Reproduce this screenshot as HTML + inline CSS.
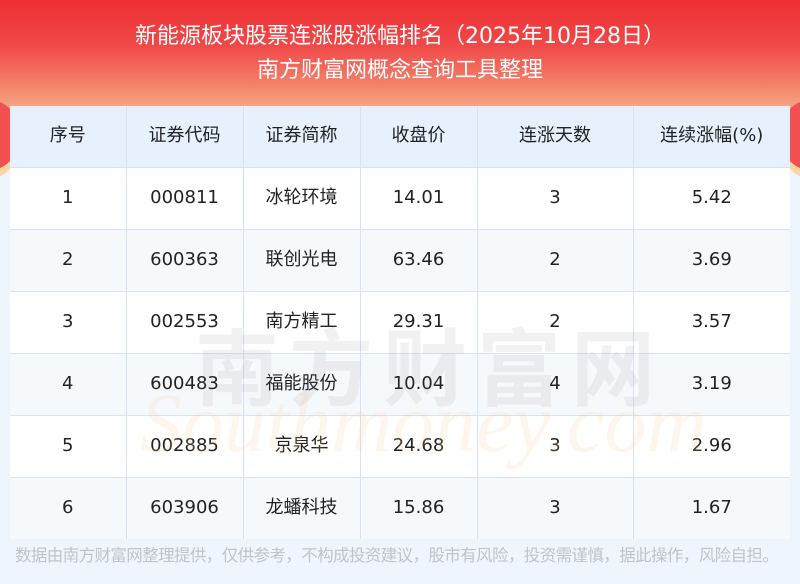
<!DOCTYPE html>
<html><head><meta charset="utf-8"><style>
*{margin:0;padding:0;box-sizing:border-box}
body{width:800px;height:584px;overflow:hidden;background:#eef5fc;font-family:"DejaVu Sans","Noto Sans CJK SC",sans-serif;position:relative}
.hdr{position:absolute;left:0;top:0;width:800px;height:150px;background:linear-gradient(180deg,#ee2f33 0%,#f04848 30%,#f48a70 60%,#f8c8a0 85%,#eef5fc 100%)}
.sideL{position:absolute;left:-40px;top:100px;width:60px;height:70px;border-radius:50%;background:#f05050;box-shadow:0 8px 0 #f9d6a0}
.sideR{position:absolute;right:-40px;top:100px;width:60px;height:70px;border-radius:50%;background:#f05050;box-shadow:0 8px 0 #f9d6a0}
.t1{position:absolute;top:23px;left:0;width:800px;text-align:center;color:#fff;font-size:22px;line-height:28px}
.t2{position:absolute;top:57px;left:0;width:800px;text-align:center;color:#fff;font-size:22px;line-height:28px}
table{position:absolute;left:10px;top:106px;width:780px;border-collapse:collapse;font-size:18px;color:#222;line-height:20px}
td{border-left:1px solid #d6e2f5;border-top:1px solid #d6e2f5;text-align:center;height:62px;vertical-align:middle}
td:first-child{border-left:none}
tr.h td{background:#e6f1fd;border-top:none;height:61px}
tr:nth-child(odd):not(.h) td{background:#f6f9fc}
tr:nth-child(even) td{background:#fff}
.foot{position:absolute;top:542px;left:15px;color:#c0c4c8;font-size:16.5px;letter-spacing:-0.6px;white-space:nowrap}
.wm1{position:absolute;left:195px;top:320px;font-size:84px;color:rgba(120,120,120,0.10);font-weight:bold;letter-spacing:10px;line-height:100px}
.wm2{position:absolute;left:140px;top:375px;font-size:84px;color:rgba(250,200,140,0.16);font-style:italic;font-family:"Liberation Serif",serif}
</style></head><body>
<div class="hdr"></div><div class="sideL"></div><div class="sideR"></div>
<div class="t1">新能源板块股票连涨股涨幅排名（2025年10月28日）</div>
<div class="t2">南方财富网概念查询工具整理</div>
<table>
<colgroup><col style="width:116px"><col style="width:117px"><col style="width:117px"><col style="width:117px"><col style="width:156px"><col style="width:157px"></colgroup>
<tr class="h"><td>序号</td><td>证券代码</td><td>证券简称</td><td>收盘价</td><td>连涨天数</td><td>连续涨幅(%)</td></tr>
<tr><td>1</td><td>000811</td><td>冰轮环境</td><td>14.01</td><td>3</td><td>5.42</td></tr>
<tr><td>2</td><td>600363</td><td>联创光电</td><td>63.46</td><td>2</td><td>3.69</td></tr>
<tr><td>3</td><td>002553</td><td>南方精工</td><td>29.31</td><td>2</td><td>3.57</td></tr>
<tr><td>4</td><td>600483</td><td>福能股份</td><td>10.04</td><td>4</td><td>3.19</td></tr>
<tr><td>5</td><td>002885</td><td>京泉华</td><td>24.68</td><td>3</td><td>2.96</td></tr>
<tr><td>6</td><td>603906</td><td>龙蟠科技</td><td>15.86</td><td>3</td><td>1.67</td></tr>
</table>
<div class="wm1">南方财富网</div>
<div class="wm2">Southmoney.com</div>
<div class="foot">数据由南方财富网整理提供，仅供参考，不构成投资建议，股市有风险，投资需谨慎，据此操作，风险自担。</div>
</body></html>
